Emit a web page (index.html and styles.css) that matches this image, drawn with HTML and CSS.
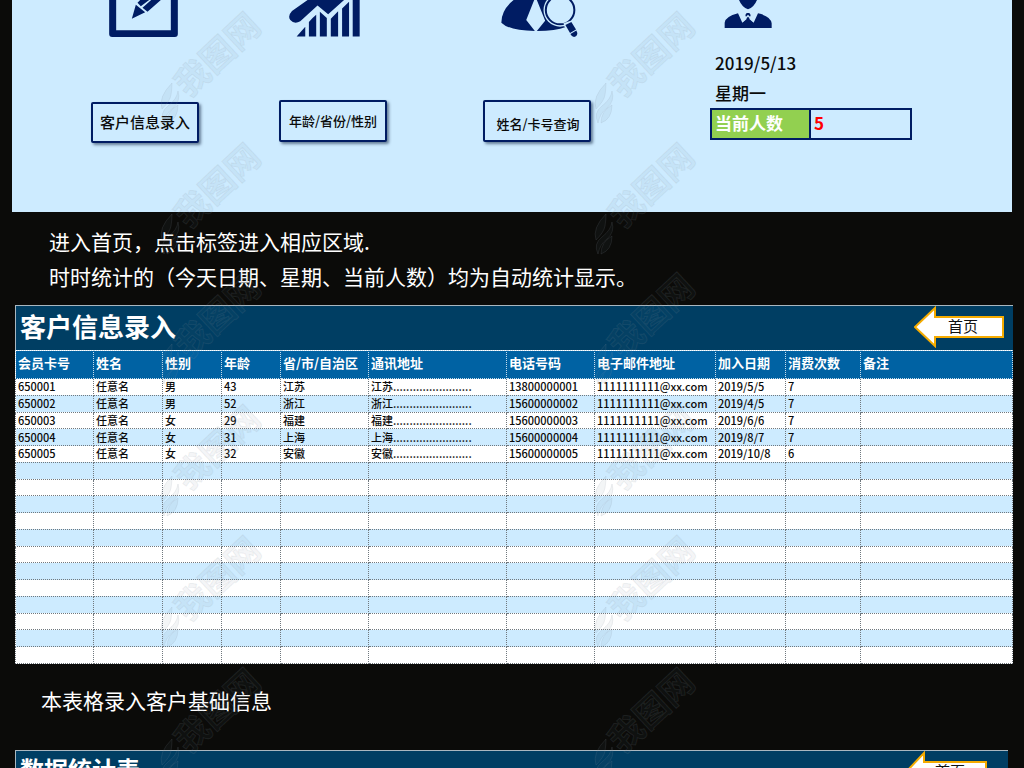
FILE: index.html
```html
<!DOCTYPE html>
<html lang="zh-CN">
<head>
<meta charset="utf-8">
<meta name="viewport" content="width=device-width, initial-scale=1">
<title>客户信息录入</title>
<link rel="stylesheet" href="styles.css">
</head>
<body>
<main class="page">
  <section class="home">
    <div class="entry">
      <svg class="icon" width="69" height="37" viewBox="330 0 206 111" aria-hidden="true"><path d="M330 0V102q0 9 9 9H527q9 0 9-9V0H515V91H351V0zM398 56L410 14L438 37zM415 8L423 0H450L425 19zM430 23L456 0H485L445 35z"/></svg>
      <button class="tile tile-large" type="button">客户信息录入</button>
    </div>
    <div class="entry">
      <svg class="icon icon-chart" width="71" height="37" viewBox="866 0 214 111" aria-hidden="true"><path d="M922 0L875 33Q861 48 870 60Q882 74 900 64L952 16L984 43L1032 0zM889 110L915 80V110zM926 110V66L937 54L948 44V110zM959 110V35L980 54V110zM992 110V56L1014 34V110zM1026 110V25L1047 5V110zM1058 0h21v110h-21z"/></svg>
      <button class="tile" type="button">年龄/省份/性别</button>
    </div>
    <div class="entry">
      <svg class="icon" width="77" height="37" viewBox="95 0 232 111" aria-hidden="true"><path d="M133 0Q96 30 96 68Q120 92 197 93L171 60L195 0zM203 0H262V70L290 81Q260 93 203 93L228 62z"/><circle class="lens-gap" cx="273" cy="30" r="50"/><circle class="lens" cx="273" cy="30" r="43"/><path class="lens-gap" d="M283 70L305 62L327 111H300z"/><path d="M289 75L307 66L321 89L303 99zM304 102L322 92L325 99Q325 109 315 111Q308 110 304 102z"/></svg>
      <button class="tile tile-low" type="button">姓名/卡号查询</button>
    </div>
    <div class="entry status">
      <svg class="icon icon-person" width="48" height="28" viewBox="760 0 144 84" aria-hidden="true"><path d="M805 0h54Q850 22 832 28Q814 22 805 0zM762 84V68Q764 50 802 40L815 68L828 57L824 45L828 39H836L840 45L836 57L849 68L862 40Q900 48 903 70V84z"/><path class="collar" d="M808 37L817 62L832 47L847 62L856 37"/></svg>
      <div class="today">
        <p>2019/5/13</p>
        <p>星期一</p>
      </div>
      <dl class="count"><dt>当前人数</dt><dd>5</dd></dl>
    </div>
  </section>

  <div class="note">
    <p>进入首页，点击标签进入相应区域.</p>
    <p>时时统计的（今天日期、星期、当前人数）均为自动统计显示。</p>
  </div>

  <section class="sheet">
    <header class="bar">
      <h2>客户信息录入</h2>
      <a class="back" href="#"><svg width="90" height="42" viewBox="0 0 90 42" aria-hidden="true"><path d="M1 21L21 2V11H89V31H21V40z"/></svg><span>首页</span></a>
    </header>
    <table class="members">
      <colgroup><col class="c-id"><col class="c-name"><col class="c-short"><col class="c-short"><col class="c-mid"><col class="c-addr"><col class="c-mid"><col class="c-mail"><col class="c-date"><col class="c-times"><col class="c-remark"></colgroup>
      <thead>
        <tr><th>会员卡号</th><th>姓名</th><th>性别</th><th>年龄</th><th>省/市/自治区</th><th>通讯地址</th><th>电话号码</th><th>电子邮件地址</th><th>加入日期</th><th>消费次数</th><th>备注</th></tr>
      </thead>
      <tbody>
        <tr><td>650001</td><td>任意名</td><td>男</td><td>43</td><td>江苏</td><td>江苏........................</td><td>13800000001</td><td>1111111111@xx.com</td><td>2019/5/5</td><td>7</td><td></td></tr>
        <tr><td>650002</td><td>任意名</td><td>男</td><td>52</td><td>浙江</td><td>浙江........................</td><td>15600000002</td><td>1111111111@xx.com</td><td>2019/4/5</td><td>7</td><td></td></tr>
        <tr><td>650003</td><td>任意名</td><td>女</td><td>29</td><td>福建</td><td>福建........................</td><td>15600000003</td><td>1111111111@xx.com</td><td>2019/6/6</td><td>7</td><td></td></tr>
        <tr><td>650004</td><td>任意名</td><td>女</td><td>31</td><td>上海</td><td>上海........................</td><td>15600000004</td><td>1111111111@xx.com</td><td>2019/8/7</td><td>7</td><td></td></tr>
        <tr><td>650005</td><td>任意名</td><td>女</td><td>32</td><td>安徽</td><td>安徽........................</td><td>15600000005</td><td>1111111111@xx.com</td><td>2019/10/8</td><td>6</td><td></td></tr>
        <tr><td></td><td></td><td></td><td></td><td></td><td></td><td></td><td></td><td></td><td></td><td></td></tr>
        <tr><td></td><td></td><td></td><td></td><td></td><td></td><td></td><td></td><td></td><td></td><td></td></tr>
        <tr><td></td><td></td><td></td><td></td><td></td><td></td><td></td><td></td><td></td><td></td><td></td></tr>
        <tr><td></td><td></td><td></td><td></td><td></td><td></td><td></td><td></td><td></td><td></td><td></td></tr>
        <tr><td></td><td></td><td></td><td></td><td></td><td></td><td></td><td></td><td></td><td></td><td></td></tr>
        <tr><td></td><td></td><td></td><td></td><td></td><td></td><td></td><td></td><td></td><td></td><td></td></tr>
        <tr><td></td><td></td><td></td><td></td><td></td><td></td><td></td><td></td><td></td><td></td><td></td></tr>
        <tr><td></td><td></td><td></td><td></td><td></td><td></td><td></td><td></td><td></td><td></td><td></td></tr>
        <tr><td></td><td></td><td></td><td></td><td></td><td></td><td></td><td></td><td></td><td></td><td></td></tr>
        <tr><td></td><td></td><td></td><td></td><td></td><td></td><td></td><td></td><td></td><td></td><td></td></tr>
        <tr><td></td><td></td><td></td><td></td><td></td><td></td><td></td><td></td><td></td><td></td><td></td></tr>
        <tr><td></td><td></td><td></td><td></td><td></td><td></td><td></td><td></td><td></td><td></td><td></td></tr>
      </tbody>
    </table>
  </section>

  <div class="note note-single">
    <p>本表格录入客户基础信息</p>
  </div>

  <section class="sheet sheet-stats">
    <header class="bar">
      <h2>数据统计表</h2>
      <a class="back" href="#"><svg width="84" height="42" viewBox="0 0 84 42" aria-hidden="true"><path d="M2 21L20 2V11H82V31H20V40z"/></svg><span>首页</span></a>
    </header>
  </section>

  <svg class="watermark" aria-hidden="true">
    <defs>
      <g id="mark">
        <path d="M14 76Q0 90 4 102Q12 94 13 88Q14 82 14 76zM20 84Q19 92 10 99Q1 106 6 116Q8 106 15 101Q23 94 20 84zM20 98Q9 104 9 116Q20 112 20 98z"/>
        <text transform="translate(58 46) rotate(-43)" text-anchor="middle" dominant-baseline="central">我图网</text>
      </g>
      <g id="column">
        <use href="#mark" y="7"/><use href="#mark" y="138"/><use href="#mark" y="268"/><use href="#mark" y="400"/><use href="#mark" y="531"/><use href="#mark" y="663"/>
      </g>
    </defs>
    <use href="#column" x="158"/>
    <use href="#column" x="592"/>
  </svg>
</main>
</body>
</html>
```
FILE: styles.css
```css
* {
  box-sizing: border-box;
}

body {
  margin: 0;
  background: #0b0b09;
  color: #0a0a0a;
  font-family: "Noto Sans CJK SC", "Noto Sans", sans-serif;
}

p, h2, dl, dd {
  margin: 0;
}

.page {
  position: relative;
  height: 100vh;
  overflow: hidden;
}

.home {
  display: grid;
  grid-template-columns: 188fr 204fr 227fr 202fr;
  margin: 0 12px;
  padding: 0 100px 69px 79px;
  background: #cdebff;
}

.entry {
  display: flex;
  flex-direction: column;
  align-items: flex-start;
}

.icon {
  margin-left: 18px;
  fill: #001c63;
}

.icon-chart {
  margin-left: 10px;
}

.icon-person {
  margin-left: 14px;
}

.lens-gap {
  fill: #cdebff;
}

.lens {
  fill: #cdebff;
  stroke: #001c63;
  stroke-width: 6;
}

.collar {
  fill: none;
  stroke: #cdebff;
  stroke-width: 4;
}

.tile {
  width: 108px;
  height: 42px;
  margin-top: 63px;
  padding: 0;
  border: 2px solid #001c63;
  border-radius: 2px;
  background: #cdebff;
  box-shadow: 2px 2px 3px rgba(0, 20, 50, .5);
  color: #0a0a0a;
  font: 500 13px/20px "Noto Sans CJK SC", "Noto Sans", sans-serif;
}

.tile-large {
  height: 41px;
  margin-top: 65px;
  padding-bottom: 2px;
  font-size: 15px;
}

.tile-low {
  padding: 6px 0 0 2px;
}

.today {
  margin-top: 20px;
  padding-left: 5px;
  font-size: 17px;
  font-weight: 500;
  line-height: 30px;
}

.count {
  display: flex;
  width: 100%;
  border: 2px solid #001c63;
  font-size: 17px;
  line-height: 26px;
}

.count dt {
  width: 50%;
  padding: 0 0 2px 3px;
  border-right: 2px solid #001c63;
  background: #92d050;
  color: #fff;
  font-weight: 700;
}

.count dd {
  padding-left: 3px;
  color: #f00;
  font-weight: 700;
}

.note {
  padding: 12px 49px 11px;
  color: #fff;
  font-size: 21px;
  line-height: 35px;
}

.note-single {
  padding: 19px 41px 32px;
}

.sheet {
  margin: 0 11px 0 15px;
}

.sheet-stats {
  margin-right: 16px;
}

.bar {
  display: flex;
  justify-content: space-between;
  height: 45px;
  padding: 0 9px 0 4px;
  border-top: 1px solid #a9b7c0;
  border-left: 1px solid #a9b7c0;
  background: #003e63;
}

.bar h2 {
  color: #fff;
  font-size: 26px;
  line-height: 40px;
}

.back {
  display: grid;
  color: #111;
  font-size: 15px;
  line-height: 40px;
  text-align: center;
  text-decoration: none;
}

.back svg, .back span {
  grid-area: 1 / 1;
}

.back span {
  padding-left: 8px;
}

.back path {
  fill: #fff;
  stroke: #f5ab00;
  stroke-width: 2;
}

.sheet-stats .bar {
  padding-right: 20px;
}

.sheet-stats h2 {
  font-size: 24px;
  line-height: 36px;
}

.members {
  width: 100%;
  height: 314px;
  border-collapse: collapse;
  table-layout: fixed;
  background: #fff;
}

.c-id { width: 78px; }
.c-name { width: 69px; }
.c-short { width: 59px; }
.c-mid { width: 88px; }
.c-addr { width: 138px; }
.c-mail { width: 121px; }
.c-date { width: 70px; }
.c-times { width: 75px; }
.c-remark { width: auto; }

.members th, .members td {
  padding: 0 2px;
  text-align: left;
  white-space: nowrap;
}

.members th {
  height: 28px;
  padding-bottom: 3px;
  border: 1px dotted #c4dcec;
  background: #0062a3;
  color: #fff;
  font-size: 13px;
  font-weight: 700;
  line-height: 20px;
}

.members td {
  height: 16px;
  border: 1px dotted #70787e;
  font-size: 11px;
  font-weight: 500;
  line-height: 15px;
}

.members tbody tr:nth-child(even) {
  background: #cdebff;
}

.watermark {
  position: absolute;
  inset: 0;
  width: 100%;
  height: 100%;
  pointer-events: none;
  fill: rgba(90, 110, 130, .07);
  stroke: rgba(140, 150, 160, .14);
  stroke-width: 1;
  font-size: 34px;
  font-weight: 700;
}
```
